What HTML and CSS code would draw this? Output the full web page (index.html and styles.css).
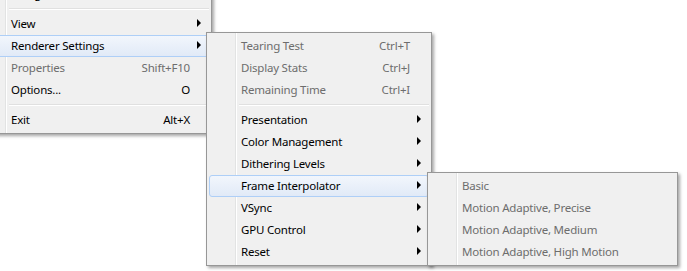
FILE: index.html
```html
<html lang="en">
<head>
    <meta charset="UTF-8">
    <title>Context menu</title>
    <link rel="stylesheet" href="styles.css">
</head>
<body>
    <div class="menu main-menu">
        <div class="item"><span class="label">Navigate</span><span class="key"></span><span class="sub"><i></i></span></div>
        <div class="sep"></div>
        <div class="item"><span class="label">View</span><span class="key"></span><span class="sub"><i></i></span></div>
        <div class="item active"><span class="label">Renderer Settings</span><span class="key"></span><span class="sub"><i></i></span></div>
        <div class="item off"><span class="label">Properties</span><span class="key">Shift+F10</span><span class="sub"></span></div>
        <div class="item"><span class="label">Options...</span><span class="key">O</span><span class="sub"></span></div>
        <div class="sep"></div>
        <div class="item"><span class="label">Exit</span><span class="key">Alt+X</span><span class="sub"></span></div>
    </div>

    <div class="menu renderer-menu">
        <div class="item off"><span class="label">Tearing Test</span><span class="key">Ctrl+T</span><span class="sub"></span></div>
        <div class="item off"><span class="label">Display Stats</span><span class="key">Ctrl+J</span><span class="sub"></span></div>
        <div class="item off"><span class="label">Remaining Time</span><span class="key">Ctrl+I</span><span class="sub"></span></div>
        <div class="sep"></div>
        <div class="item"><span class="label">Presentation</span><span class="key"></span><span class="sub"><i></i></span></div>
        <div class="item"><span class="label">Color Management</span><span class="key"></span><span class="sub"><i></i></span></div>
        <div class="item"><span class="label">Dithering Levels</span><span class="key"></span><span class="sub"><i></i></span></div>
        <div class="item active"><span class="label">Frame Interpolator</span><span class="key"></span><span class="sub"><i></i></span></div>
        <div class="item"><span class="label">VSync</span><span class="key"></span><span class="sub"><i></i></span></div>
        <div class="item"><span class="label">GPU Control</span><span class="key"></span><span class="sub"><i></i></span></div>
        <div class="item"><span class="label">Reset</span><span class="key"></span><span class="sub"><i></i></span></div>
    </div>

    <div class="menu interp-menu">
        <div class="item off"><span class="label">Basic</span></div>
        <div class="item off"><span class="label">Motion Adaptive, Precise</span></div>
        <div class="item off"><span class="label">Motion Adaptive, Medium</span></div>
        <div class="item off"><span class="label">Motion Adaptive, High Motion</span></div>
    </div>
</body>
</html>
```

FILE: styles.css
```css
body {
    margin: 0;
    padding: 0;
    background-color: #fff;
    font-family: "Noto Sans", "Open Sans", sans-serif;
    font-size: 11.5px;
    letter-spacing: -0.2px;
    color: #000;
    overflow: hidden;
}
.menu {
    position: absolute;
    box-sizing: border-box;
    padding: 2px;
    border: 1px solid #979797;
    background-color: #f0f0f0;
    background-image: linear-gradient(to right, transparent 28px, #e2e3e3 28px, #e2e3e3 29px, #fff 29px, #fff 30px, transparent 30px);
    box-shadow: 2px 2px 3px rgba(0, 0, 0, 0.35);
}
.main-menu {
    left: -24px;
    top: -20px;
    width: 236px;
}
.renderer-menu {
    left: 206px;
    top: 32px;
    width: 226px;
}
.interp-menu {
    left: 427px;
    top: 172px;
    width: 251px;
}
.item {
    display: flex;
    align-items: center;
    box-sizing: border-box;
    height: 22px;
    padding-left: 31px;
    padding-bottom: 2px;
    border: 1px solid transparent;
    border-radius: 3px;
    white-space: nowrap;
}
.item.active {
    border-color: #aecff7;
    background: linear-gradient(#f2f6fc, #e1eaf7);
}
.item.off {
    color: #6d6d6d;
}
.label {
    flex: 1;
}
.sub {
    width: 18px;
    height: 8px;
}
.sub i {
    display: block;
    margin-left: 7px;
    width: 0;
    height: 0;
    border-left: 4px solid #000;
    border-top: 4px solid transparent;
    border-bottom: 4px solid transparent;
}
.sep {
    height: 8px;
    margin-left: 30px;
    background: linear-gradient(transparent 3px, #e0e0e0 3px, #e0e0e0 4px, #fff 4px, #fff 5px, transparent 5px);
}
```
